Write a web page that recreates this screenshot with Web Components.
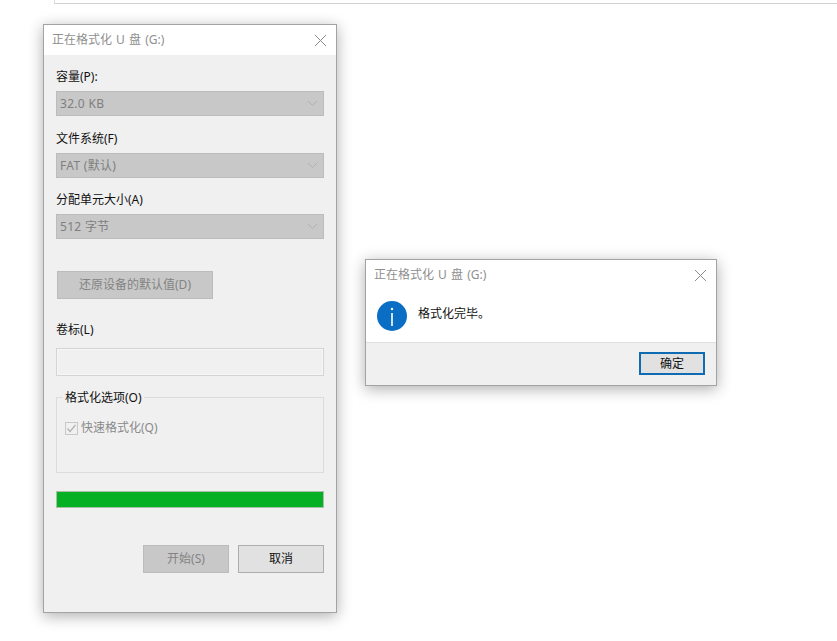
<!DOCTYPE html>
<html lang="zh">
<head>
<meta charset="utf-8">
<title>格式化</title>
<style>
  html, body { margin: 0; height: 100%; background: #fff; overflow: hidden; }
  body { font: 12px/16px "Noto Sans", "Noto Sans CJK SC", sans-serif; color: #111; }
</style>
</head>
<body>
<desk-top>
  <format-window title-text="正在格式化 U 盘 (G:)" style="left:43px;top:24px;width:294px;height:589px">
    <div style="display:flex;flex-direction:column;padding:14px 12px 0 12px">
      <form-field label="容量(P):" value="32.0 KB"></form-field>
      <form-field label="文件系统(F)" value="FAT (默认)" style="margin-top:15px"></form-field>
      <form-field label="分配单元大小(A)" value="512 字节" style="margin-top:14px"></form-field>
      <push-button disabled style="width:156px;margin:32px 0 0 1px">还原设备的默认值(D)</push-button>
      <text-field label="卷标(L)" style="margin-top:23px"></text-field>
      <option-group label="格式化选项(O)" style="margin-top:21px">
        <check-box>快速格式化(Q)</check-box>
      </option-group>
      <progress-bar style="margin-top:18px"></progress-bar>
      <div style="display:flex;justify-content:flex-end;gap:9px;margin-top:37px">
        <push-button disabled style="width:86px">开始(S)</push-button>
        <push-button style="width:86px">取消</push-button>
      </div>
    </div>
  </format-window>

  <format-window title-text="正在格式化 U 盘 (G:)" style="left:365px;top:259px;width:352px;height:127px">
    <message-box>格式化完毕。</message-box>
  </format-window>
</desk-top>

<script>
class DeskTop extends HTMLElement {
  constructor () {
    super()
    this.attachShadow({ mode: 'open' }).innerHTML = `
      <style>
        :host { display: block; position: relative; width: 837px; height: 641px; overflow: hidden; }
        .sheet { height: 3px; margin-left: 54px; border-left: 1px solid #dcdcdc; border-bottom: 1px solid #d2d2d2; }
      </style>
      <div class="sheet"></div>
      <slot></slot>`
  }
}

class FormatWindow extends HTMLElement {
  constructor () {
    super()
    this.attachShadow({ mode: 'open' }).innerHTML = `
      <style>
        :host {
          display: flex; flex-direction: column; position: absolute; box-sizing: border-box;
          background: #f0f0f0; border: 1px solid #a3a3a3;
          box-shadow: 0 3px 14px rgba(0,0,0,.32);
        }
        .title {
          flex: none; display: flex; align-items: center; justify-content: space-between;
          height: 30px; box-sizing: border-box; padding: 0 9px 0 8px; background: #fff; color: #8f8f8f;
          word-spacing: 1px;
        }
        svg { display: block; }
        .body { flex: 1; display: flex; flex-direction: column; min-height: 0; }
      </style>
      <div class="title">
        <span class="text"></span>
        <svg width="13" height="13" viewBox="0 0 13 13"><path d="M1 1 12 12M12 1 1 12" stroke="#8a8a8a" fill="none"/></svg>
      </div>
      <div class="body"><slot></slot></div>`
  }

  connectedCallback () {
    this.shadowRoot.querySelector('.text').textContent = this.getAttribute('title-text')
  }
}

class FormField extends HTMLElement {
  constructor () {
    super()
    this.attachShadow({ mode: 'open' }).innerHTML = `
      <style>
        :host { display: block; }
        label { display: block; height: 16px; margin-bottom: 6px; }
        .select {
          display: flex; align-items: center; justify-content: space-between;
          height: 25px; box-sizing: border-box; padding: 0 3px 0 3px;
          background: #c8c8c8; border: 1px solid #bcbcbc; color: #7f7f7f;
        }
        .value { letter-spacing: .3px; }
        svg { display: block; margin-right: 2px; }
      </style>
      <label></label>
      <div class="select">
        <span class="value"></span>
        <svg width="11" height="7" viewBox="0 0 11 7"><path d="M1 1 5.5 5.5 10 1" stroke="#b0b0b0" fill="none"/></svg>
      </div>`
  }

  connectedCallback () {
    this.shadowRoot.querySelector('label').textContent = this.getAttribute('label')
    this.shadowRoot.querySelector('.value').textContent = this.getAttribute('value')
  }
}

class TextField extends HTMLElement {
  constructor () {
    super()
    this.attachShadow({ mode: 'open' }).innerHTML = `
      <style>
        :host { display: block; }
        label { display: block; height: 16px; margin-bottom: 10px; }
        .input { height: 28px; box-sizing: border-box; background: #f0f0f0; border: 1px solid #d4d4d4; box-shadow: inset 0 0 0 1px #f7f7f7; }
      </style>
      <label></label>
      <div class="input"></div>`
  }

  connectedCallback () {
    this.shadowRoot.querySelector('label').textContent = this.getAttribute('label')
  }
}

class PushButton extends HTMLElement {
  constructor () {
    super()
    this.attachShadow({ mode: 'open' }).innerHTML = `
      <style>
        :host {
          display: flex; align-items: center; justify-content: center;
          height: 28px; box-sizing: border-box;
          background: #e1e1e1; border: 1px solid #adadad; color: #111;
        }
        :host([disabled]) { background: #c8c8c8; border-color: #bcbcbc; color: #838383; }
        :host([default]) { border: 2px solid #0f6cb3; background: #e1e1e1; }
      </style>
      <slot></slot>`
  }
}

class OptionGroup extends HTMLElement {
  constructor () {
    super()
    this.attachShadow({ mode: 'open' }).innerHTML = `
      <style>
        :host { display: block; position: relative; height: 76px; box-sizing: border-box; border: 1px solid #dcdcdc; padding: 22px 8px 0 8px; }
        .legend { position: absolute; left: 6px; top: -8px; padding: 0 2px; background: #f0f0f0; }
      </style>
      <span class="legend"></span>
      <slot></slot>`
  }

  connectedCallback () {
    this.shadowRoot.querySelector('.legend').textContent = this.getAttribute('label')
  }
}

class CheckBox extends HTMLElement {
  constructor () {
    super()
    this.attachShadow({ mode: 'open' }).innerHTML = `
      <style>
        :host { display: flex; align-items: center; gap: 3px; height: 16px; color: #8a8a8a; }
        svg { display: block; flex: none; }
      </style>
      <svg width="13" height="13" viewBox="0 0 13 13">
        <rect x=".5" y=".5" width="12" height="12" fill="#f0f0f0" stroke="#c8c8c8"/>
        <path d="M2.5 6.5 5 9.5 10.5 3" stroke="#b0b0b0" stroke-width="1.2" fill="none"/>
      </svg>
      <slot></slot>`
  }
}

class ProgressBar extends HTMLElement {
  constructor () {
    super()
    this.attachShadow({ mode: 'open' }).innerHTML = `
      <style>
        :host { display: block; height: 17px; box-sizing: border-box; background: #06b025; border: 1px solid #a9bfa9; }
      </style>`
  }
}

class MessageBox extends HTMLElement {
  constructor () {
    super()
    this.attachShadow({ mode: 'open' }).innerHTML = `
      <style>
        :host { display: flex; flex-direction: column; flex: 1; }
        .main { flex: none; height: 53px; box-sizing: border-box; display: flex; align-items: flex-start; gap: 11px; padding: 11px 0 0 11px; background: #fff; border-bottom: 1px solid #dfdfdf; }
        .text { margin-top: 5px; }
        svg { display: block; flex: none; }
        .foot { flex: 1; display: flex; justify-content: flex-end; align-items: flex-start; padding: 9px 11px 0 0; }
        push-button { width: 66px; height: 23px; }
      </style>
      <div class="main">
        <svg width="30" height="30" viewBox="0 0 30 30">
          <circle cx="15" cy="15" r="15" fill="#0a6fc4"/>
          <rect x="14.2" y="12" width="1.6" height="13" fill="#fff"/>
          <circle cx="15" cy="8" r="1.2" fill="#fff"/>
        </svg>
        <span class="text"><slot></slot></span>
      </div>
      <div class="foot"><push-button default>确定</push-button></div>`
  }
}

customElements.define('desk-top', DeskTop)
customElements.define('format-window', FormatWindow)
customElements.define('form-field', FormField)
customElements.define('text-field', TextField)
customElements.define('push-button', PushButton)
customElements.define('option-group', OptionGroup)
customElements.define('check-box', CheckBox)
customElements.define('progress-bar', ProgressBar)
customElements.define('message-box', MessageBox)
</script>
</body>
</html>
